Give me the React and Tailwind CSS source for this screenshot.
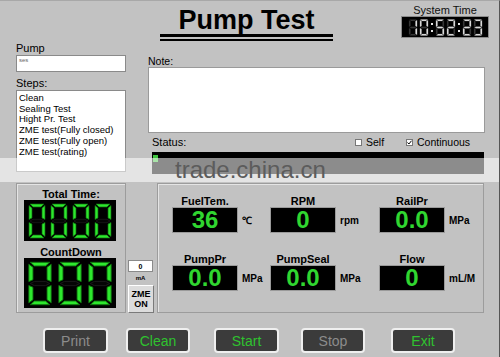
import React from 'react'

const SEGS = {
  a: '3,1 17,1 14,4 6,4',
  b: '18,2.5 18,16.5 15,15 15,5',
  c: '18,19.5 18,33.5 15,31 15,21',
  d: '3,35 17,35 14,32 6,32',
  e: '2,19.5 5,21 5,31 2,33.5',
  f: '2,2.5 5,5 5,15 2,16.5',
  g: '3,18 6,16.3 14,16.3 17,18 14,19.7 6,19.7',
}

const DIGITS = {
  '0': 'abcdef',
  '1': 'bc',
  '2': 'abdeg',
  '3': 'abcdg',
  '5': 'acdfg',
}

const Digit = ({ d, on, off, edge, className }) => (
  <svg viewBox="0 0 20 36" preserveAspectRatio="none" className={className}>
    {Object.keys(SEGS).map((k) => {
      const lit = DIGITS[d].includes(k)
      return (
        <polygon
          key={k}
          points={SEGS[k]}
          fill={lit ? on : off}
          stroke={lit ? edge : '#1d1d1d'}
          strokeWidth="0.7"
        />
      )
    })}
  </svg>
)

const GreenDigit = ({ d, className }) => (
  <Digit d={d} on="#2ee82e" off="#050505" edge="#0c6a0c" className={className} />
)

const TimeDigit = ({ d }) => (
  <Digit d={d} on="#e6e6e6" off="#3b3b3b" edge="#9a9a9a" className="w-[10px] h-[17px]" />
)

const Colon = () => (
  <div className="flex flex-col gap-[5px] px-[1px]">
    <div className="w-[2px] h-[2px] bg-[#e6e6e6]" />
    <div className="w-[2px] h-[2px] bg-[#e6e6e6]" />
  </div>
)

const Check = ({ checked, label }) => (
  <div className="flex items-center gap-[4px]">
    <div className="w-[7px] h-[7px] bg-white border border-[#777] flex items-center justify-center">
      {checked && (
        <svg viewBox="0 0 6 6" className="w-[5px] h-[5px]">
          <path d="M0.6 3 L2.3 4.8 L5.4 0.9" stroke="#000" strokeWidth="1.2" fill="none" />
        </svg>
      )}
    </div>
    <span className="text-[10.5px] leading-none">{label}</span>
  </div>
)

const Readout = ({ label, value, unit, width }) => (
  <div className={`flex flex-col ${width}`}>
    <div className="w-[66px] text-center text-[11px] leading-[12px] font-bold">{label}</div>
    <div className="flex items-center">
      <div className="w-[66px] h-[26px] bg-black border border-[#9a9a9a] flex items-center justify-center text-[24px] leading-none font-bold text-[#30d630]">
        {value}
      </div>
      <span className="ml-[4px] text-[10px] font-bold">{unit}</span>
    </div>
  </div>
)

const Button = ({ label, green, className }) => (
  <div
    className={`h-[25px] flex items-center justify-center bg-[#3b3b3b] border-2 border-[#efefef] rounded-[4px] text-[14px] leading-none ${
      green ? 'text-[#2fc22f]' : 'text-[#8c8c8c]'
    } ${className}`}
  >
    {label}
  </div>
)

const steps = [
  'Clean',
  'Sealing Test',
  'Hight Pr. Test',
  'ZME test(Fully closed)',
  'ZME test(Fully open)',
  'ZME test(rating)',
]

export default function App() {
  return (
    <div className="relative w-[500px] h-[357px] overflow-hidden bg-[#c2c2c2] border-t border-[#a8a8a8] border-r border-r-[#555] font-['Liberation_Sans',Arial,sans-serif] text-black">
      {/* header */}
      <div className="flex h-[41px]">
        <div className="w-[160px]" />
        <div className="w-[173px] pt-[4px]">
          <h1 className="text-[27px] leading-[30px] font-bold text-center">Pump Test</h1>
          <div className="-mt-[1px] h-[7px] border-t-[3px] border-b-2 border-black" />
        </div>
        <div className="ml-auto mr-[10px] w-[88px] pt-[3px]">
          <div className="text-[11px] leading-[12px] text-center text-[#111]">System Time</div>
          <div className="h-[22px] bg-black border border-[#8a8a8a] flex items-center justify-center gap-[1px]">
            <TimeDigit d="1" />
            <TimeDigit d="0" />
            <Colon />
            <TimeDigit d="5" />
            <TimeDigit d="2" />
            <Colon />
            <TimeDigit d="2" />
            <TimeDigit d="3" />
          </div>
        </div>
      </div>

      {/* pump / steps / note */}
      <div className="flex pl-[16px]">
        <div className="w-[110px]">
          <div className="text-[11px] leading-[13px]">Pump</div>
          <div className="h-[17px] bg-white border border-[#8a8a8a] px-[2px] text-[6px] leading-[8px] text-[#666]">ses</div>
          <div className="mt-[5px] text-[11px] leading-[13px]">Steps:</div>
          <div className="h-[82px] bg-white border border-[#8a8a8a] pl-[2px] pt-[2px] text-[9.5px] leading-[10.7px]">
            {steps.map((s) => (
              <div key={s}>{s}</div>
            ))}
          </div>
        </div>
        <div className="ml-[22px] w-[337px] pt-[14px]">
          <div className="text-[10.5px] leading-[11px]">Note:</div>
          <div className="h-[66px] bg-white border border-[#9a9a9a]" />
          <div className="h-[19px] flex items-center pl-[4px]">
            <span className="w-[203px] text-[11px] leading-none">Status:</span>
            <div className="w-[51px]">
              <Check label="Self" />
            </div>
            <Check checked label="Continuous" />
          </div>
          <div className="ml-[4px] w-[332px] h-[22px] bg-black pt-[3px] pl-[1px]">
            <div className="w-[5px] h-[7px] bg-[#3fc43f]" />
          </div>
        </div>
      </div>

      {/* displays */}
      <div className="mt-[9px] flex pl-[16px] h-[130px]">
        <div className="w-[110px] border border-[#9c9c9c] shadow-[inset_1px_1px_0_#e4e4e4] pt-[4px]">
          <div className="text-center text-[11px] leading-[12px] font-bold">Total Time:</div>
          <div className="ml-[7px] w-[92px] h-[41px] bg-black flex items-center justify-center gap-[2px]">
            {['0', '0', '0', '0'].map((d, i) => (
              <GreenDigit key={i} d={d} className="w-[20px] h-[36px]" />
            ))}
          </div>
          <div className="mt-[5px] text-center text-[11px] leading-[12px] font-bold">CountDown</div>
          <div className="ml-[7px] w-[92px] h-[50px] bg-black flex items-center justify-center gap-[2px]">
            {['0', '0', '0'].map((d, i) => (
              <GreenDigit key={i} d={d} className="w-[28px] h-[45px]" />
            ))}
          </div>
        </div>

        <div className="w-[31px] pt-[77px] pl-[2px]">
          <div className="w-[25px] h-[12px] bg-white border border-[#8a8a8a] flex items-center justify-center text-[7px] font-bold leading-none">
            0
          </div>
          <div className="w-[25px] text-center text-[6px] leading-[12px] font-bold">mA</div>
          <div className="mt-[1px] w-[26px] h-[28px] bg-[#dcdcdc] border border-t-white border-l-white border-r-[#7a7a7a] border-b-[#7a7a7a] flex flex-col items-center justify-center text-[9px] leading-[10px] font-bold">
            <span>ZME</span>
            <span>ON</span>
          </div>
        </div>

        <div className="w-[327px] border border-[#9c9c9c] shadow-[inset_1px_1px_0_#e4e4e4] pl-[14px] pt-[11px]">
          <div className="flex">
            <Readout label="FuelTem." value="36" unit="℃" width="w-[98px]" />
            <Readout label="RPM" value="0" unit="rpm" width="w-[109px]" />
            <Readout label="RailPr" value="0.0" unit="MPa" width="w-[100px]" />
          </div>
          <div className="flex mt-[20px]">
            <Readout label="PumpPr" value="0.0" unit="MPa" width="w-[98px]" />
            <Readout label="PumpSeal" value="0.0" unit="MPa" width="w-[109px]" />
            <Readout label="Flow" value="0" unit="mL/M" width="w-[100px]" />
          </div>
        </div>
      </div>

      {/* buttons */}
      <div className="mt-[15px] flex">
        <Button label="Print" className="ml-[43px] w-[65px]" />
        <Button label="Clean" green className="ml-[18px] w-[64px]" />
        <Button label="Start" green className="ml-[24px] w-[65px]" />
        <Button label="Stop" className="ml-[22px] w-[64px]" />
        <Button label="Exit" green className="ml-[26px] w-[64px]" />
      </div>

      {/* watermark band */}
      <div className="absolute left-0 top-[157px] w-full h-[24px] bg-white/55 pointer-events-none">
        <span className="absolute left-[175px] -top-[1px] text-[24px] leading-[25px] text-[#5c5c5c]">trade.china.cn</span>
      </div>
    </div>
  )
}
